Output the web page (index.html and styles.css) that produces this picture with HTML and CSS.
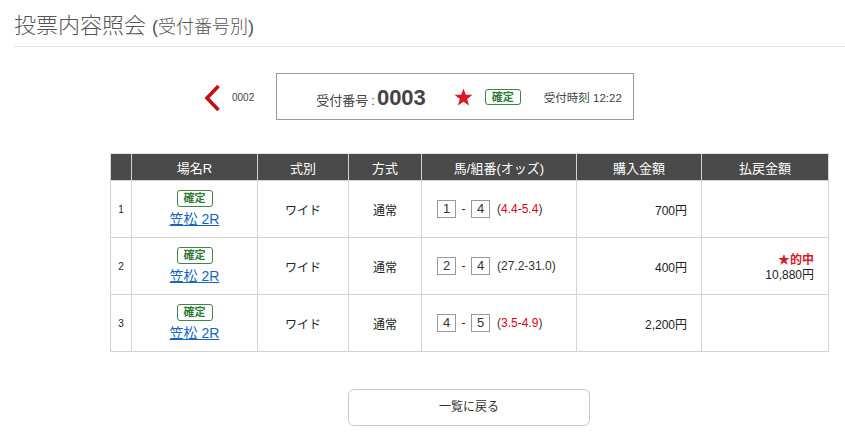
FILE: index.html
```html
<!DOCTYPE html>
<html lang="ja">
<head>
<meta charset="utf-8">
<title>投票内容照会</title>
<link rel="stylesheet" href="styles.css">
</head>
<body>
<div class="page">
  <h1 class="title">投票内容照会<span class="sub">(受付番号別)</span></h1>
  <div class="content">
    <div class="nav">
      <a class="prev" href="#">
        <svg class="chev" width="17" height="28" viewBox="0 0 17 28"><polyline points="14.5,2 3,14 14.5,26" fill="none" stroke="#c40d14" stroke-width="3.6"/></svg>
        <span class="prev-no">0002</span>
      </a>
      <div class="ticket">
        <span class="rcpt"><span class="rcpt-label">受付番号</span><span class="colon">:</span><span class="rcpt-no">0003</span></span>
        <svg class="star" width="19" height="18" viewBox="0 0 20 19"><polygon points="10,0.5 12.4,7 19.5,7.2 13.9,11.5 15.9,18.5 10,14.4 4.1,18.5 6.1,11.5 0.5,7.2 7.6,7" fill="#d9182a"/></svg>
        <span class="badge">確定</span>
        <span class="time">受付時刻 12:22</span>
      </div>
    </div>

    <table class="bets">
      <colgroup>
        <col style="width:21px"><col style="width:126px"><col style="width:91px"><col style="width:73px"><col style="width:155px"><col style="width:125px"><col style="width:127px">
      </colgroup>
      <thead>
        <tr><th></th><th>場名R</th><th>式別</th><th>方式</th><th>馬/組番(オッズ)</th><th>購入金額</th><th>払戻金額</th></tr>
      </thead>
      <tbody>
        <tr>
          <td class="no">1</td>
          <td class="venue"><span class="badge">確定</span><a href="#">笠松 2R</a></td>
          <td class="c">ワイド</td>
          <td class="c">通常</td>
          <td class="combo"><span class="box">1</span><span class="dash">-</span><span class="box">4</span><span class="odds">(<em>4.4</em>-<em>5.4</em>)</span></td>
          <td class="amt">700円</td>
          <td class="amt"></td>
        </tr>
        <tr>
          <td class="no">2</td>
          <td class="venue"><span class="badge">確定</span><a href="#">笠松 2R</a></td>
          <td class="c">ワイド</td>
          <td class="c">通常</td>
          <td class="combo"><span class="box">2</span><span class="dash">-</span><span class="box">4</span><span class="odds">(27.2-31.0)</span></td>
          <td class="amt">400円</td>
          <td class="amt pay"><span class="hit">★的中</span><span>10,880円</span></td>
        </tr>
        <tr>
          <td class="no">3</td>
          <td class="venue"><span class="badge">確定</span><a href="#">笠松 2R</a></td>
          <td class="c">ワイド</td>
          <td class="c">通常</td>
          <td class="combo"><span class="box">4</span><span class="dash">-</span><span class="box">5</span><span class="odds">(<em>3.5</em>-<em>4.9</em>)</span></td>
          <td class="amt">2,200円</td>
          <td class="amt"></td>
        </tr>
      </tbody>
    </table>

    <a class="back" href="#">一覧に戻る</a>
  </div>
</div>
</body>
</html>
```

FILE: styles.css
```css
* { box-sizing: border-box; }
html, body { margin: 0; padding: 0; background: #fff; }
body {
  font-family: "Liberation Sans", "Noto Sans CJK JP", sans-serif;
  color: #333;
  font-size: 12px;
}
.page { padding-left: 14px; }
.title {
  margin: 0;
  height: 47px;
  padding-top: 12px;
  line-height: 28px;
  font-size: 22px;
  font-weight: 300;
  color: #555;
  border-bottom: 1px solid #e6e6e6;
  white-space: nowrap;
}
.title .sub { font-size: 18px; margin-left: 6px; }

.content { width: 718px; margin-left: 96px; }

.nav {
  display: flex;
  align-items: center;
  margin-top: 26px;
  padding-left: 94px;
}
.prev {
  display: flex;
  align-items: center;
  text-decoration: none;
  color: #444;
}
.chev { display: block; margin-top: 2px; }
.prev-no { font-size: 10px; margin-left: 11px; margin-top: 1px; }
.ticket {
  margin-left: 22px;
  width: 358px;
  height: 47px;
  border: 1px solid #999;
  display: flex;
  align-items: center;
  padding-left: 39px;
}
.rcpt { display: flex; align-items: baseline; margin-top: 2px; }
.rcpt-label { font-size: 13px; color: #444; }
.colon { font-size: 13px; color: #444; margin-left: 3px; }
.rcpt-no { font-size: 22px; font-weight: bold; color: #444; margin-left: 2px; }
.star { margin-left: 28px; }
.ticket .badge { margin-left: 12px; height: 16px; line-height: 14px; }
.time { margin-left: 23px; font-size: 11.5px; color: #444; }

.badge {
  display: inline-block;
  width: 36px;
  height: 17px;
  line-height: 15px;
  border: 1px solid #3a8a45;
  border-radius: 3px;
  color: #2d7a36;
  font-size: 11px;
  font-weight: bold;
  text-align: center;
  background: #fff;
}

.bets {
  margin-top: 33px;
  width: 718px;
  border-collapse: collapse;
  table-layout: fixed;
}
.bets th {
  background: #4a4a4a;
  color: #fff;
  font-weight: normal;
  font-size: 13px;
  height: 27px;
  padding: 0;
  border: 1px solid #d4d4d4;
  border-top-color: #e4e4e4;
}
.bets td {
  border: 1px solid #d4d4d4;
  height: 57px;
  padding: 0;
  color: #222;
  font-size: 12px;
}
.bets td.no { text-align: center; font-size: 10px; }
.bets td.c { text-align: center; }
.venue { text-align: center; }
.venue .badge { display: block; margin: 0 auto 1px; }
.venue a { color: #1266c2; font-size: 14px; text-decoration: underline; }
.combo { padding-left: 15px !important; white-space: nowrap; }
.box {
  display: inline-block;
  width: 19px;
  height: 18px;
  line-height: 16px;
  border: 1px solid #999;
  text-align: center;
  font-size: 13px;
  vertical-align: middle;
  color: #333;
}
.dash { display: inline-block; width: 15px; text-align: center; vertical-align: middle; }
.odds { margin-left: 7px; vertical-align: middle; color: #333; }
.odds em { font-style: normal; color: #e60012; }
.amt { text-align: right; padding-right: 14px !important; }
.pay span { display: block; line-height: 15px; }
.pay { padding-top: 3px !important; }
.hit { color: #d9182a; font-weight: bold; font-size: 12px; }

.back {
  display: block;
  width: 242px;
  height: 37px;
  margin: 37px auto 0;
  border: 1px solid #c8c8c8;
  border-radius: 6px;
  text-align: center;
  line-height: 35px;
  color: #333;
  text-decoration: none;
  font-size: 12px;
}
```
